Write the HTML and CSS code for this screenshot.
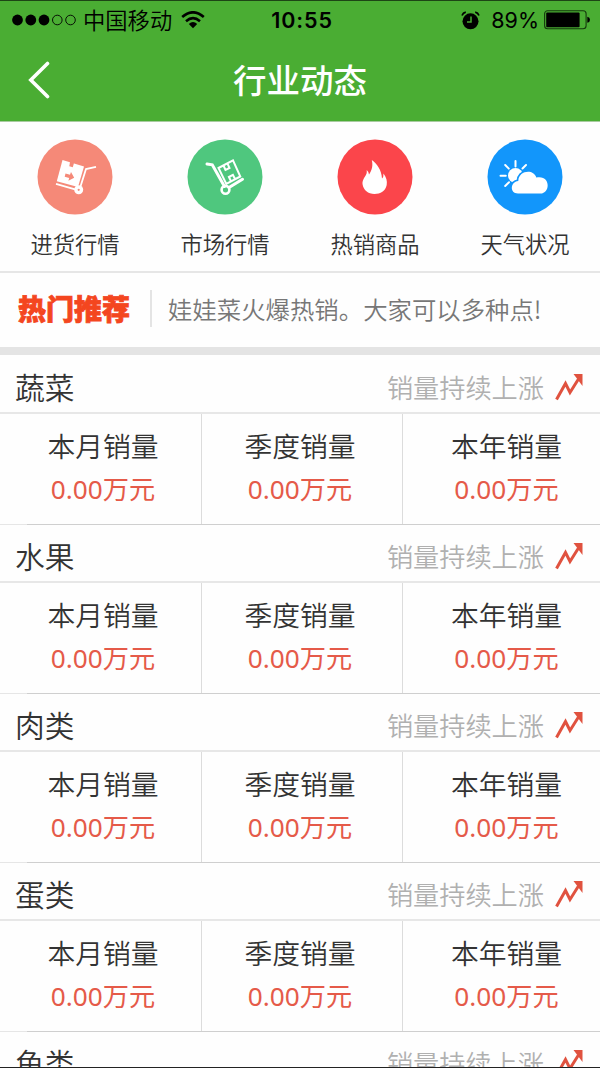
FILE: index.html
```html
<!DOCTYPE html>
<html lang="zh-CN">
<head>
    <meta charset="UTF-8">
    <meta name="viewport" content="width=device-width, initial-scale=1.0">
    <title>行业动态</title>
    <link rel="stylesheet" href="styles.css">
</head>
<body>
    <svg width="0" height="0" class="defs">
        <symbol id="trend" viewBox="0 0 28 28">
            <path d="M1.5 26.5 L10.5 10.5 L15 19.5 L23.5 6" fill="none" stroke="#e0523f" stroke-width="3"/>
            <path d="M18.5 1 H27.5 V13 Z" fill="#e0523f"/>
        </symbol>
    </svg>
    <div class="top">
        <div class="status">
            <div class="status-left">
                <svg width="64" height="12" viewBox="0 0 64 12">
                    <circle cx="5.5" cy="6" r="5.4"/>
                    <circle cx="18.8" cy="6" r="5.4"/>
                    <circle cx="32" cy="6" r="5.4"/>
                    <circle cx="45.3" cy="6" r="4.8" fill="none" stroke="#000" stroke-width="0.9"/>
                    <circle cx="58.5" cy="6" r="4.8" fill="none" stroke="#000" stroke-width="0.9"/>
                </svg>
                <span class="carrier">中国移动</span>
                <svg width="24" height="18" viewBox="0 0 24 18">
                    <path d="M1.2 6 Q12 -3.4 22.8 6" fill="none" stroke="#000" stroke-width="2.6"/>
                    <path d="M5 10.2 Q12 4 19 10.2" fill="none" stroke="#000" stroke-width="2.5"/>
                    <path d="M7.8 12.9 Q12 9.3 16.2 12.9 L12 17.2 Z"/>
                </svg>
            </div>
            <div class="time">10:55</div>
            <div class="status-right">
                <svg width="19" height="19" viewBox="0 0 19 19">
                    <circle cx="9.5" cy="10.3" r="8"/>
                    <path d="M1 4.5 Q2 1.7 4.8 1.2 M14.2 1.2 Q17 1.7 18 4.5" fill="none" stroke="#000" stroke-width="1.7"/>
                    <path d="M10 5.5 V11 H6" fill="none" stroke="#4aad33" stroke-width="1.5"/>
                </svg>
                <span class="percent">89%</span>
                <svg width="46" height="20" viewBox="0 0 46 20">
                    <rect x="0.6" y="0.8" width="41.5" height="18" rx="3" fill="none" stroke="#153a0d" stroke-width="1.1"/>
                    <rect x="2.2" y="2.4" width="33.4" height="14.8" rx="1"/>
                    <path d="M43.3 6.8 Q46 7.3 46 9.8 T43.3 12.8 Z"/>
                </svg>
            </div>
        </div>
        <div class="navbar">
            <svg class="back" width="22" height="38" viewBox="0 0 22 38">
                <path d="M19.5 2.5 L2.8 19 L19.5 35.5" fill="none" stroke="#fff" stroke-width="3.6" stroke-linecap="round"/>
            </svg>
            <h1>行业动态</h1>
        </div>
    </div>

    <div class="menu">
        <div class="menu-item">
            <svg width="76" height="76" viewBox="0 0 76 76">
                <circle cx="38" cy="38" r="37.5" fill="#f58978"/>
                <path d="M25.5 21 L47 27.5 L41 48 L19.8 42.3 Z" fill="#fff"/>
                <path d="M33.5 20 L32.3 27.3 L35.8 28.3 L37.5 22 Z" fill="#f58978"/>
                <path d="M28.5 34.5 L33 35.8 L34 33 L37.2 38.8 L31.4 41.8 L32.2 39 L27.7 37.7 Z" fill="#f58978"/>
                <path d="M59 27.8 L49 30 L43 49 M19 44.8 L38 50.3" fill="none" stroke="#fff" stroke-width="1.8"/>
                <circle cx="41.7" cy="50.8" r="4.5" fill="#fff"/>
                <circle cx="41.7" cy="50.8" r="1.1" fill="#f58978"/>
            </svg>
            <span>进货行情</span>
        </div>
        <div class="menu-item">
            <svg width="76" height="76" viewBox="0 0 76 76">
                <circle cx="38" cy="38" r="37.5" fill="#4fc77e"/>
                <path d="M20 25 L25.3 25.8 L37.5 47.5 M42 48.5 L55.5 40.3" fill="none" stroke="#fff" stroke-width="3" stroke-linecap="round"/>
                <path d="M31.5 29 L46 21.3 L53.3 37.5 L39.3 45 Z M36.5 26.5 L38.5 31 L42.5 29 L40.4 24.4 M44 42.3 L41.9 38 L45.9 35.8 L48 40" fill="none" stroke="#fff" stroke-width="2"/>
                <circle cx="38.5" cy="50.8" r="3.9" fill="none" stroke="#fff" stroke-width="2.6"/>
            </svg>
            <span>市场行情</span>
        </div>
        <div class="menu-item">
            <svg width="76" height="76" viewBox="0 0 76 76">
                <circle cx="38" cy="38" r="37.5" fill="#fb454b"/>
                <path d="M34.8 21 C40 25 44.5 30.5 45 39.5 Q46.7 38 46.5 34.5 C49.5 38.5 50.3 42 49.7 46 C48.5 52 43.5 55 37.5 55 C31 55 26.5 51 25.6 45.5 C25 41.5 27.5 38.5 28.9 36 C30.2 33.5 29.7 32.5 29.7 31 Q32 33 32 35.5 C35 31.5 36.2 26.5 34.8 21 Z" fill="#fff"/>
            </svg>
            <span>热销商品</span>
        </div>
        <div class="menu-item">
            <svg width="76" height="76" viewBox="0 0 76 76">
                <circle cx="38" cy="38" r="37.5" fill="#1296fb"/>
                <path d="M28.5 22 V27.5 M18.2 26 L21.8 29.6 M13.5 36.7 H18.8 M18.2 47 L22 43.3 M35.5 29.5 L39 26" stroke="#fff" stroke-width="2" stroke-linecap="round"/>
                <circle cx="28.5" cy="36.5" r="7.5" fill="#fff"/>
                <path d="M31 54.5 C22.5 54.5 23 42.8 31.3 42 C31.5 31.5 46.5 29.5 49.3 38.5 C64 35.5 63.5 54.5 53.5 54.5 Z" fill="#fff" stroke="#1296fb" stroke-width="3.6" paint-order="stroke"/>
            </svg>
            <span>天气状况</span>
        </div>
    </div>

    <div class="notice">
        <strong>热门推荐</strong>
        <p>娃娃菜火爆热销。大家可以多种点!</p>
    </div>

    <div class="list">
        <div class="section">
            <div class="section-head">
                <h2>蔬菜</h2>
                <span>销量持续上涨</span>
                <svg width="28" height="28"><use href="#trend"/></svg>
            </div>
            <div class="stats">
                <div class="stat"><p>本月销量</p><b>0.00万元</b></div>
                <div class="stat"><p>季度销量</p><b>0.00万元</b></div>
                <div class="stat"><p>本年销量</p><b>0.00万元</b></div>
            </div>
        </div>
        <div class="section">
            <div class="section-head">
                <h2>水果</h2>
                <span>销量持续上涨</span>
                <svg width="28" height="28"><use href="#trend"/></svg>
            </div>
            <div class="stats">
                <div class="stat"><p>本月销量</p><b>0.00万元</b></div>
                <div class="stat"><p>季度销量</p><b>0.00万元</b></div>
                <div class="stat"><p>本年销量</p><b>0.00万元</b></div>
            </div>
        </div>
        <div class="section">
            <div class="section-head">
                <h2>肉类</h2>
                <span>销量持续上涨</span>
                <svg width="28" height="28"><use href="#trend"/></svg>
            </div>
            <div class="stats">
                <div class="stat"><p>本月销量</p><b>0.00万元</b></div>
                <div class="stat"><p>季度销量</p><b>0.00万元</b></div>
                <div class="stat"><p>本年销量</p><b>0.00万元</b></div>
            </div>
        </div>
        <div class="section">
            <div class="section-head">
                <h2>蛋类</h2>
                <span>销量持续上涨</span>
                <svg width="28" height="28"><use href="#trend"/></svg>
            </div>
            <div class="stats">
                <div class="stat"><p>本月销量</p><b>0.00万元</b></div>
                <div class="stat"><p>季度销量</p><b>0.00万元</b></div>
                <div class="stat"><p>本年销量</p><b>0.00万元</b></div>
            </div>
        </div>
        <div class="section">
            <div class="section-head">
                <h2>鱼类</h2>
                <span>销量持续上涨</span>
                <svg width="28" height="28"><use href="#trend"/></svg>
            </div>
        </div>
    </div>
</body>
</html>
```

FILE: styles.css
```css
* {
    box-sizing: border-box;
    margin: 0;
    padding: 0;
}
body {
    display: flex;
    flex-direction: column;
    height: 1068px;
    overflow: hidden;
    background-color: #fefefe;
    border-bottom: 1px solid #222;
    font-family: "Noto Sans CJK SC", sans-serif;
    font-weight: 350;
    color: #333;
}
svg {
    display: block;
    flex-shrink: 0;
}
.defs {
    position: absolute;
}
.top {
    flex-shrink: 0;
    height: 122px;
    background-color: #4aad33;
    border-top: 1px solid #1d4515;
    border-bottom: 1px solid #a9cba0;
}
.status {
    display: grid;
    grid-template-columns: 1fr auto 1fr;
    align-items: center;
    height: 38px;
    padding: 0 12px;
    color: #000;
}
.status-left,.status-right {
    display: flex;
    align-items: center;
}
.status-right {
    justify-content: flex-end;
    margin-right: -2px;
}
.carrier {
    margin: 0 9px 0 7px;
    font-size: 22.3px;
    line-height: 36px;
    padding-bottom: 2px;
}
.time {
    padding-left: 4px;
    font-family: Inter, sans-serif;
    font-size: 21.5px;
    font-weight: 600;
    letter-spacing: 0.9px;
}
.percent {
    margin: 0 5px 0 11px;
    font-family: Inter, sans-serif;
    font-size: 21.5px;
    font-weight: 400;
}
.navbar {
    display: grid;
    grid-template-columns: 72px 1fr 72px;
    align-items: center;
    height: 82px;
}
.back {
    margin-left: 28px;
}
.navbar h1 {
    font-size: 33.5px;
    font-weight: 500;
    line-height: 80px;
    padding-bottom: 2px;
    text-align: center;
    color: #fff;
}
.menu {
    display: grid;
    grid-template-columns: repeat(4, 1fr);
    flex-shrink: 0;
    height: 151px;
    padding-top: 17px;
    border-bottom: 2px solid #e6e6e6;
}
.menu-item {
    display: flex;
    flex-direction: column;
    align-items: center;
    font-size: 22.3px;
}
.menu-item span {
    margin-top: 11px;
    line-height: 34px;
}
.notice {
    display: flex;
    align-items: center;
    flex-shrink: 0;
    height: 82px;
    padding: 0 0 3px 18px;
    border-bottom: 8px solid #e4e4e4;
}
.notice strong {
    width: 134px;
    font-size: 28px;
    font-weight: 900;
    line-height: 37px;
    color: #f4461f;
    border-right: 2px solid #e4e4e4;
    -webkit-text-stroke: 0.8px #f4461f;
}
.notice p {
    margin-left: 16px;
    font-size: 24.4px;
    white-space: nowrap;
    color: #777;
}
.list {
    padding-top: 1px;
}
.section {
    height: 169px;
    border-bottom: 1px solid;
    border-image: linear-gradient(to right, #e6e6e6 28px, #cfcfcf 28px) 1;
}
.section-head {
    display: flex;
    align-items: center;
    height: 58px;
    padding: 6px 17px 0 15px;
    border-bottom: 2px solid #e7e7e7;
}
.section-head h2 {
    flex: 1;
    font-size: 29.7px;
    font-weight: 350;
    line-height: 50px;
}
.section-head span {
    margin-right: 11px;
    font-size: 26.2px;
    line-height: 50px;
    color: #b0b0b0;
}
.stats {
    display: grid;
    grid-template-columns: 202px 201px 197px;
    height: 110px;
}
.stat {
    padding-top: 12px;
    text-align: center;
    border-right: 1px solid #dcdcdc;
}
.stat:nth-child(1) {
    padding-left: 5px;
}
.stat:nth-child(2) {
    padding-right: 4px;
}
.stat:nth-child(3) {
    padding-left: 10px;
    border-right: none;
}
.stat p {
    font-size: 27.8px;
    line-height: 38px;
}
.stat b {
    display: block;
    font-family: "Noto Sans", "Noto Sans CJK SC", sans-serif;
    font-size: 26.2px;
    font-weight: 400;
    line-height: 50px;
    color: #e55a49;
}
```
